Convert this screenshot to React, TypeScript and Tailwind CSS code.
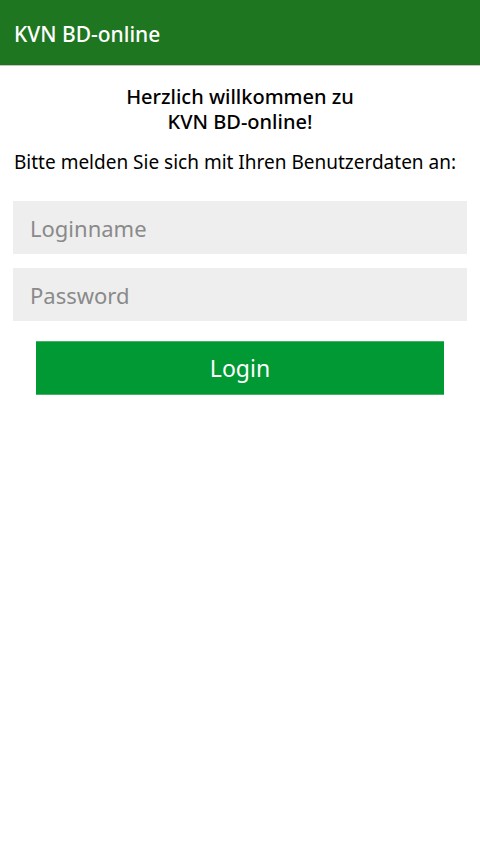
import React from "react";

export default function App() {
  return (
    <div className="min-h-[854px] w-[480px] bg-white" style={{ fontFamily: '"Noto Sans", "Open Sans", sans-serif' }}>
      <header className="flex h-[66px] items-center border-b border-[#c4c4c4] bg-[#1e7620] pl-[14px] pt-[4px]">
        <h1 className="text-[21px] font-medium leading-none text-white">KVN BD-online</h1>
      </header>
      <main className="flex flex-col pt-[18px]">
        <h2 className="text-center text-[20px] font-medium leading-[25px] text-black">
          Herzlich willkommen zu
          <br />
          KVN BD-online!
        </h2>
        <p className="mt-[15px] pl-[14px] text-[19px] leading-[26px] text-black">
          Bitte melden Sie sich mit Ihren Benutzerdaten an:
        </p>
        <div className="mx-[13px] mt-[26px] flex flex-col gap-[14px]">
          <input
            type="text"
            placeholder="Loginname"
            className="h-[53px] w-full bg-[#eeeeee] pl-[17px] text-[22px] text-black outline-none placeholder:text-[#8a8a8a]"
          />
          <input
            type="password"
            placeholder="Password"
            className="h-[53px] w-full bg-[#eeeeee] pl-[17px] text-[22px] text-black outline-none placeholder:text-[#8a8a8a]"
          />
        </div>
        <button className="mx-[36px] mt-[20px] h-[54px] border-y border-[#4caf68] bg-[#009933] text-[23px] text-white">
          Login
        </button>
      </main>
    </div>
  );
}
